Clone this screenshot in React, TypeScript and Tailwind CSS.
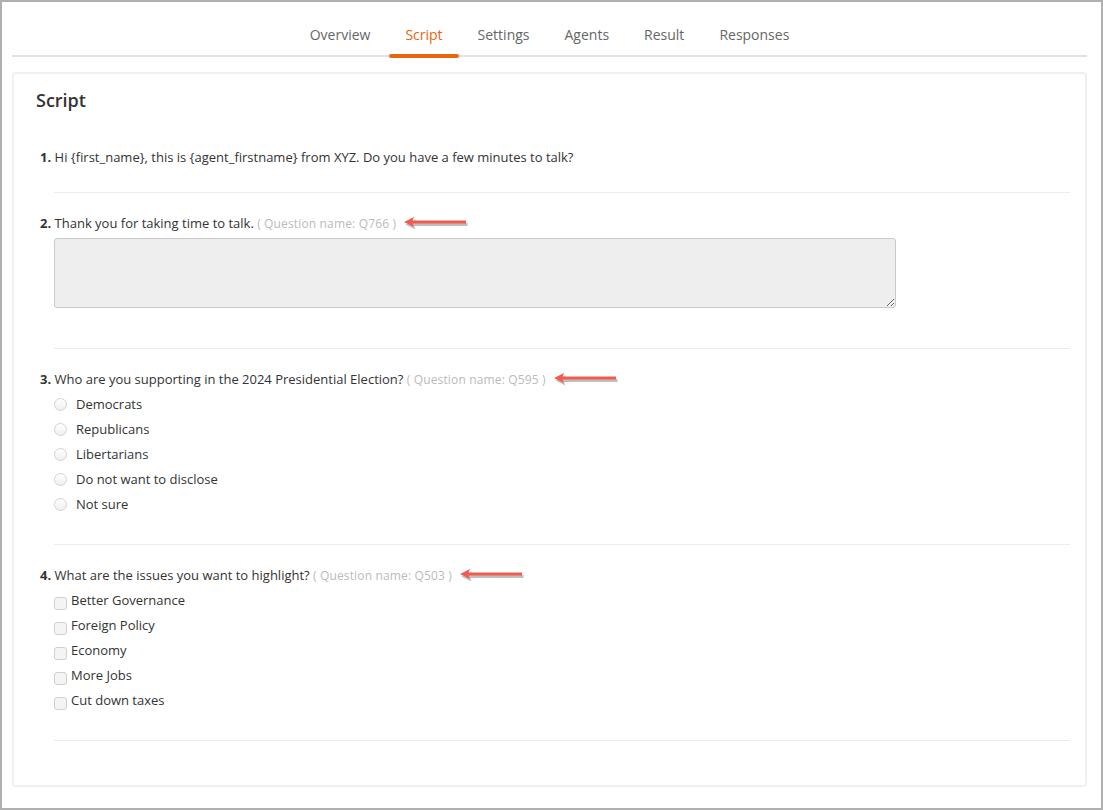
import React from "react";

const tabs = ["Overview", "Script", "Settings", "Agents", "Result", "Responses"];

function Arrow() {
  return (
    <svg width="64" height="14" viewBox="0 0 64 14" className="ml-[8px] shrink-0">
      <g transform="translate(1.5,2)" opacity="0.55">
        <rect x="7" y="5" width="55" height="3" fill="#8a8a8a" />
        <path d="M0 6.5 L10 1.5 L8 6.5 L10 11.5 Z" fill="#8a8a8a" />
      </g>
      <rect x="7" y="4.5" width="55" height="3" fill="#f25b4e" />
      <path d="M0 6 L10 1 L8 6 L10 11 Z" fill="#f25b4e" />
    </svg>
  );
}

function Title({ n, text, qname }: { n: number; text: string; qname?: string }) {
  return (
    <div className="flex items-center h-[20px] leading-[20px] text-[13px] text-[#333] whitespace-nowrap">
      <span>
        <b className="font-bold">{n}.</b> {text}
        {qname && (
          <span className="text-[12px] tracking-[0.15px] text-[#bbbbbb]"> ( Question name: {qname} )</span>
        )}
      </span>
      {qname && <Arrow />}
    </div>
  );
}

function Divider() {
  return <div className="ml-[14px] h-px bg-[#ececec]" />;
}

function Radio({ label }: { label: string }) {
  return (
    <div className="flex items-center h-[25px] text-[13px] text-[#333]">
      <span className="w-[13px] h-[13px] rounded-full border border-[#d3d3d3] bg-gradient-to-b from-white to-[#efefef] shrink-0" />
      <span className="ml-[9px]">{label}</span>
    </div>
  );
}

function Check({ label }: { label: string }) {
  return (
    <div className="flex items-center h-[25px] text-[13px] text-[#333]">
      <span className="w-[13px] h-[13px] rounded-[3px] border border-[#d0d0d0] bg-[#f4f4f4] shrink-0 translate-y-[3px]" />
      <span className="ml-[4px]">{label}</span>
    </div>
  );
}

export default function App() {
  return (
    <div
      className="w-[1103px] h-[810px] border-2 border-[#b0b0b0] bg-white box-border overflow-hidden"
      style={{ fontFamily: '"Open Sans", "Liberation Sans", sans-serif' }}
    >
      <div className="pl-[10px] pr-[14px]">
        <nav className="h-[55px] border-b-2 border-[#e2e2e2] flex justify-center gap-[3px]">
          {tabs.map((t) => (
            <div
              key={t}
              className={
                "relative px-4 pt-[23px] leading-[20px] text-[14px] " +
                (t === "Script" ? "text-[#e8650f]" : "text-[#666]")
              }
            >
              {t}
              {t === "Script" && (
                <span className="absolute left-0 right-0 bottom-[-3px] h-[4px] rounded-full bg-[#e8650f]" />
              )}
            </div>
          ))}
        </nav>

        <div className="mt-[15px] border-2 border-[#f0f0f0] rounded-[4px] pl-[26px] pr-[15px] pb-[44px]">
          <h2 className="pt-[13px] -ml-[4px] leading-[26px] text-[18px] font-semibold text-[#333]">Script</h2>

          <div className="mt-[34px]">
            <Title n={1} text="Hi {first_name}, this is {agent_firstname} from XYZ. Do you have a few minutes to talk?" />
          </div>
          <div className="mt-[25px]">
            <Divider />
          </div>

          <div className="pt-[20px]">
            <Title n={2} text="Thank you for taking time to talk." qname="Q766" />
            <div className="ml-[14px] mt-[5px]">
              <textarea className="block w-[842px] h-[70px] bg-[#eeeeee] border border-[#c9c9c9] rounded-[3px] outline-none" />
            </div>
          </div>
          <div className="mt-[40px]">
            <Divider />
          </div>

          <div className="pt-[20px]">
            <Title n={3} text="Who are you supporting in the 2024 Presidential Election?" qname="Q595" />
            <div className="ml-[14px] mt-[3px]">
              {["Democrats", "Republicans", "Libertarians", "Do not want to disclose", "Not sure"].map((o) => (
                <Radio key={o} label={o} />
              ))}
            </div>
          </div>
          <div className="mt-[27px]">
            <Divider />
          </div>

          <div className="pt-[20px]">
            <Title n={4} text="What are the issues you want to highlight?" qname="Q503" />
            <div className="ml-[14px] mt-[3px]">
              {["Better Governance", "Foreign Policy", "Economy", "More Jobs", "Cut down taxes"].map((o) => (
                <Check key={o} label={o} />
              ))}
            </div>
          </div>
          <div className="mt-[27px]">
            <Divider />
          </div>
        </div>
      </div>
    </div>
  );
}
